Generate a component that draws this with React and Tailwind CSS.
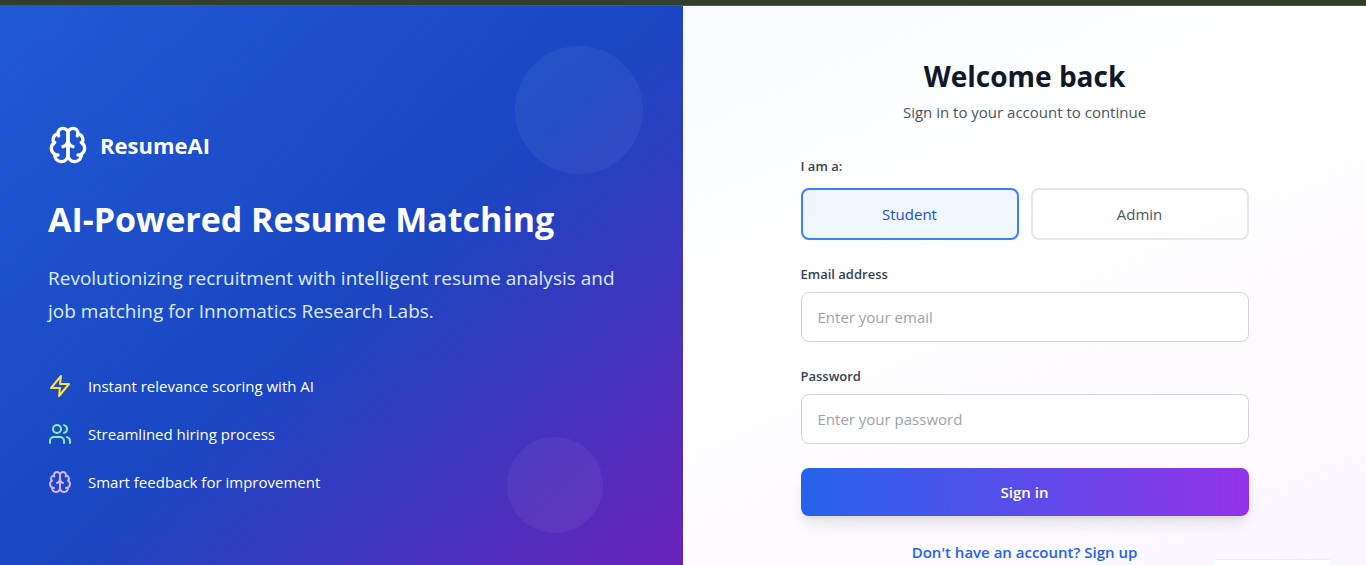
import { useState } from "react";
import { Users } from "lucide-react";

function BrainIcon({ className }) {
  return (
    <svg
      className={className}
      viewBox="0 0 24 24"
      fill="none"
      stroke="currentColor"
      strokeWidth="2"
      strokeLinecap="round"
      strokeLinejoin="round"
      aria-hidden="true"
    >
      <path d="M12 5a3 3 0 1 0-5.997.125 4 4 0 0 0-2.526 5.77 4 4 0 0 0 .556 6.588A4 4 0 1 0 12 18Z" />
      <path d="M12 5a3 3 0 1 1 5.997.125 4 4 0 0 1 2.526 5.77 4 4 0 0 1-.556 6.588A4 4 0 1 1 12 18Z" />
      <path d="M15 13a4.5 4.5 0 0 1-3-4 4.5 4.5 0 0 1-3 4" />
      <path d="M17.599 6.5a3 3 0 0 0 .399-1.375" />
      <path d="M6.003 5.125A3 3 0 0 0 6.401 6.5" />
      <path d="M3.477 10.896a4 4 0 0 1 .585-.396" />
      <path d="M19.938 10.5a4 4 0 0 1 .585.396" />
      <path d="M6 18a4 4 0 0 1-1.967-.516" />
      <path d="M19.967 17.484A4 4 0 0 1 18 18" />
    </svg>
  );
}

function ZapIcon({ className }) {
  return (
    <svg
      className={className}
      viewBox="0 0 24 24"
      fill="none"
      stroke="currentColor"
      strokeWidth="2"
      strokeLinecap="round"
      strokeLinejoin="round"
      aria-hidden="true"
    >
      <polygon points="13 2 3 14 12 14 11 22 21 10 12 10 13 2" />
    </svg>
  );
}

const features = [
  { Icon: ZapIcon, color: "text-[#fde047]", label: "Instant relevance scoring with AI" },
  { Icon: Users, color: "text-[#86efac]", label: "Streamlined hiring process" },
  { Icon: BrainIcon, color: "text-[#d8b4fe]", label: "Smart feedback for improvement" },
];

function HeroPanel() {
  return (
    <section className="relative flex w-1/2 flex-col justify-center bg-linear-to-br/srgb from-[#2159d4] via-[#1a46c2] to-[#711fb9] px-12 text-white">
      <div className="absolute top-10 right-10 size-32 rounded-full bg-white/5" />
      <div className="absolute right-20 bottom-20 size-24 rounded-full bg-white/5" />
      <div className="relative">
        <div className="mb-8 flex items-center gap-3">
          <BrainIcon className="size-10" />
          <span className="text-[22px] leading-8 font-bold">ResumeAI</span>
        </div>
        <h1 className="mb-5 text-[34px] leading-[45px] font-bold">AI-Powered Resume Matching</h1>
        <p className="mb-[46px] text-[19px] leading-[33px] text-[#dbeafe]">
          Revolutionizing recruitment with intelligent resume analysis and job matching for
          Innomatics Research Labs.
        </p>
        <ul className="flex flex-col gap-6">
          {features.map(({ Icon, color, label }) => (
            <li key={label} className="flex items-center gap-4">
              <Icon className={`size-6 ${color}`} />
              <span className="text-[15px] leading-6">{label}</span>
            </li>
          ))}
        </ul>
      </div>
    </section>
  );
}

function Field({ id, label, type, placeholder }) {
  return (
    <div className="flex flex-col gap-2">
      <label htmlFor={id} className="text-[13px] leading-5 font-semibold text-[#374151]">
        {label}
      </label>
      <input
        id={id}
        type={type}
        placeholder={placeholder}
        className="w-full rounded-lg border border-[#d1d5db] bg-white px-4 py-3 text-[15px] leading-6 text-[#111827] placeholder:text-[#9ca3af]"
      />
    </div>
  );
}

function SignInForm() {
  const [role, setRole] = useState("Student");
  return (
    <form className="flex w-full max-w-md flex-col gap-6" onSubmit={(e) => e.preventDefault()}>
      <div className="mb-2 text-center">
        <h2 className="mb-1 text-[28px] leading-10 font-bold text-[#111827]">Welcome back</h2>
        <p className="text-[15px] leading-6 text-[#4b5563]">Sign in to your account to continue</p>
      </div>
      <div role="group" aria-labelledby="role-label">
        <div id="role-label" className="mb-3 text-[13px] leading-5 font-semibold text-[#374151]">
          I am a:
        </div>
        <div className="grid grid-cols-2 gap-3">
          {["Student", "Admin"].map((name) => (
            <button
              key={name}
              type="button"
              aria-pressed={role === name}
              onClick={() => setRole(name)}
              className={`rounded-lg border-2 p-3 text-[15px] leading-6 ${
                role === name
                  ? "border-[#3b82f6] bg-[#eff6ff] text-[#1d4ed8]"
                  : "border-[#e5e7eb] text-[#4b5563]"
              }`}
            >
              {name}
            </button>
          ))}
        </div>
      </div>
      <Field id="email" label="Email address" type="email" placeholder="Enter your email" />
      <Field id="password" label="Password" type="password" placeholder="Enter your password" />
      <button
        type="submit"
        className="rounded-lg bg-linear-to-r/srgb from-[#2563eb] to-[#9333ea] px-4 py-3 text-[15px] leading-6 font-semibold text-white shadow-lg"
      >
        Sign in
      </button>
      <a href="#signup" className="self-center text-[15px] leading-6 font-semibold text-[#2563eb]">
        Don't have an account? Sign up
      </a>
    </form>
  );
}

export default function App() {
  return (
    <div className="font-['Open_Sans','Noto_Sans',sans-serif]">
      <div className="h-1.5 border-b border-[#4b5563] bg-[#313f2c]" />
      <main className="flex min-h-[607px] bg-linear-to-br/srgb from-[#eff6ff] via-white to-[#faf5ff]">
        <HeroPanel />
        <section className="flex w-1/2 items-center justify-center px-8">
          <SignInForm />
        </section>
      </main>
      <div className="fixed right-8 bottom-0 h-1.5 w-[123px] rounded-t-lg border border-b-0 border-[#e0f2fe] bg-white" />
    </div>
  );
}
